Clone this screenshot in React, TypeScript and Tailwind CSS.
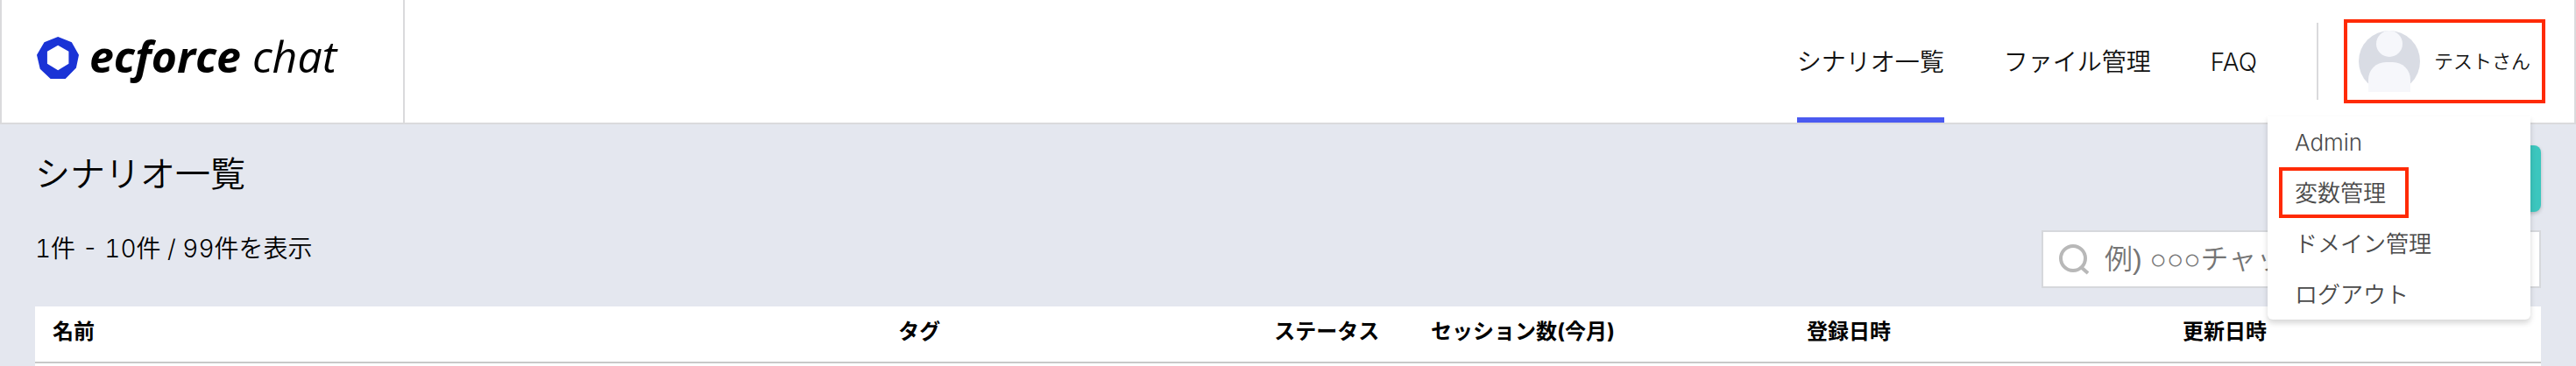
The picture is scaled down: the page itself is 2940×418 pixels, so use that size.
const navItems = [
  { label: "シナリオ一覧", active: true },
  { label: "ファイル管理", active: false },
  { label: "FAQ", active: false },
];

const menuItems = [
  { label: "Admin", marked: false },
  { label: "変数管理", marked: true },
  { label: "ドメイン管理", marked: false },
  { label: "ログアウト", marked: false },
];

const columns = [
  { label: "名前", width: "w-[33.75%]" },
  { label: "タグ", width: "w-[15%]" },
  { label: "ステータス", width: "w-[6.25%]" },
  { label: "セッション数(今月)", width: "w-[15%]" },
  { label: "登録日時", width: "w-[15%]" },
  { label: "更新日時", width: "w-[15%]" },
];

function Logo() {
  return (
    <a href="#" className="flex w-[460px] items-center border-r-2 border-[#dadadc] pl-10 text-black">
      <svg viewBox="0 0 141 141" className="mb-2 size-12 shrink-0" aria-hidden="true">
        <path
          fillRule="evenodd"
          fill="#1a33d6"
          d="M71 0 117 18 141 61 132 104 96 141H46L11 108 0 61 25 18ZM71 29 35 49V90L71 112 107 90V49Z"
        />
      </svg>
      <span className="mb-3 ml-3 font-['Open_Sans',sans-serif] text-[50px] whitespace-nowrap italic">
        <span className="font-bold">ecforce</span> <span className="font-medium">chat</span>
      </span>
    </a>
  );
}

function Avatar() {
  return (
    <svg viewBox="0 0 70 70" className="size-[70px] shrink-0" aria-hidden="true">
      <circle cx="35" cy="35" r="35" fill="#d9dce4" />
      <circle cx="35" cy="15" r="15" fill="#f6f7fb" />
      <path d="M11 70V56a20 20 0 0 1 20-20h8a20 20 0 0 1 20 20v14Z" fill="#f6f7fb" />
    </svg>
  );
}

function SearchIcon() {
  return (
    <svg viewBox="0 0 40 40" className="size-10 shrink-0" fill="none" stroke="#b8b8b8" strokeWidth="4" aria-hidden="true">
      <circle cx="18" cy="19" r="14" />
      <path d="m27 29 8 7" />
    </svg>
  );
}

function UserMenu() {
  return (
    <div className="relative mr-[33px]">
      <button type="button" className="flex h-24 items-center border-4 border-[#ff2a05] px-[13px] text-[22px]">
        <Avatar />
        <span className="ml-4 whitespace-nowrap">テストさん</span>
      </button>

      <ul className="absolute top-[111px] right-[17px] z-10 w-[300px] rounded-b-md bg-white pl-[13px] text-[26px] text-[#4a4a4a] shadow-[0_4px_6px_rgba(0,0,0,0.16)]">
        {menuItems.map((item) => (
          <li key={item.label}>
            <a
              href="#"
              className={`inline-flex h-[58px] items-center border-4 px-[14px] ${item.marked ? "border-[#ff2a05] pr-[22px]" : "border-transparent"}`}
            >
              {item.label}
            </a>
          </li>
        ))}
      </ul>
    </div>
  );
}

export default function App() {
  return (
    <div lang="ja" className="flex min-h-screen flex-col bg-[#e4e7ef] font-[Inter,'Noto_Sans_CJK_JP',sans-serif] font-[350] text-[#111]">
      <header className="flex h-[142px] border-x-2 border-b-2 border-[#dadadc] bg-white">
        <Logo />
        <nav className="ml-auto flex gap-[68px] text-[28px]">
          {navItems.map((item) => (
            <a
              key={item.label}
              href="#"
              className={`flex items-center border-b-[6px] pt-2 whitespace-nowrap ${item.active ? "border-b-[#4a5af0]" : "border-b-transparent"}`}
            >
              {item.label}
            </a>
          ))}
        </nav>
        <div className="ml-[68px] flex items-center">
          <div className="mr-[29px] h-[88px] w-[2px] bg-[#dadadc]" />
          <UserMenu />
        </div>
      </header>

      <main className="flex flex-1 flex-col px-10 pt-6">
        <div className="flex justify-between">
          <div className="text-black">
            <h1 className="text-[40px] leading-[66px]">シナリオ一覧</h1>
            <p className="mt-8 text-[28px] leading-10 tabular-nums">1件 - 10件 / 99件を表示</p>
          </div>
          <div className="flex flex-col items-end">
            <button
              type="button"
              aria-label="新規作成"
              className="h-[76px] w-60 rounded-lg bg-[#3cc6be] shadow-[0_2px_4px_rgba(0,0,0,0.2)]"
            />
            <label className="mt-[21px] flex h-[66px] w-[570px] items-center border-2 border-[#d6d8dc] bg-white pl-4">
              <SearchIcon />
              <input
                type="search"
                aria-label="シナリオを検索"
                placeholder="例) ○○○チャットボット"
                className="ml-[14px] min-w-0 flex-1 bg-transparent font-['Liberation_Sans','Noto_Sans_CJK_JP',sans-serif] text-[32px] outline-none placeholder:text-[#757575]"
              />
            </label>
          </div>
        </div>

        <div className="mt-[21px] flex-1 bg-white">
          <table className="w-full table-fixed border-collapse">
            <thead>
              <tr className="border-b-2 border-[#c8c8c8]">
                {columns.map((col) => (
                  <th
                    key={col.label}
                    scope="col"
                    className={`h-16 px-5 pb-1.5 text-left text-2xl font-bold whitespace-nowrap text-black ${col.width}`}
                  >
                    {col.label}
                  </th>
                ))}
              </tr>
            </thead>
          </table>
        </div>
      </main>
    </div>
  );
}
